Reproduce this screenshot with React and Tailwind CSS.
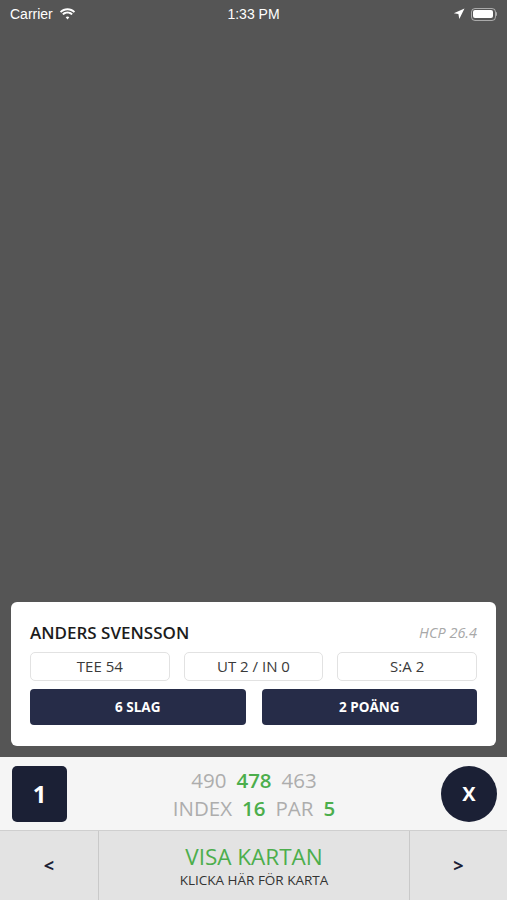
export default function App() {
  return (
    <div
      className="flex h-[900px] w-[507px] flex-col overflow-hidden bg-[#555555]"
      style={{ fontFamily: '"Open Sans", "Noto Sans", sans-serif' }}
    >
      {/* status bar */}
      <div className="relative flex h-[28px] items-center px-[10px] text-[14px] text-white" style={{ fontFamily: '"Liberation Sans", Arial, sans-serif' }}>
        <span>Carrier</span>
        <svg className="ml-[6px]" width="17" height="12" viewBox="0 0 17 12" fill="white">
          <path d="M8.5 2.2c2.4 0 4.6.9 6.3 2.5l1.3-1.3C14 1.4 11.4.3 8.5.3S3 1.4 .9 3.4l1.3 1.3C3.9 3.1 6.1 2.2 8.5 2.2z" />
          <path d="M8.5 5.4c1.5 0 2.9.6 4 1.6l1.3-1.3C12.4 4.3 10.5 3.5 8.5 3.5S4.6 4.3 3.2 5.7l1.3 1.3c1.1-1 2.5-1.6 4-1.6z" />
          <path d="M8.5 8.6c.7 0 1.3.3 1.8.7L8.5 11.5 6.7 9.3c.5-.4 1.1-.7 1.8-.7z" />
        </svg>
        <span className="absolute left-1/2 -translate-x-1/2">1:33 PM</span>
        <div className="ml-auto flex items-center gap-[6px]">
          <svg width="12" height="12" viewBox="0 0 12 12" fill="white">
            <path d="M11.5.5 .8 5.2l4.6.9.9 4.8z" />
          </svg>
          <div className="flex items-center">
            <div className="h-[13px] w-[25px] rounded-[4px] border border-white/50 p-[1.5px]">
              <div className="h-full w-full rounded-[2px] bg-white" />
            </div>
            <div className="h-[4px] w-[1.5px] rounded-r bg-white/50" />
          </div>
        </div>
      </div>

      <div className="flex-1" />

      {/* player card */}
      <div className="mx-[11px] mb-[11px] rounded-[6px] bg-white px-[19px] pb-[21px] pt-[19px]">
        <div className="flex items-center justify-between">
          <span className="text-[17px] font-semibold leading-[24px] text-[#1c1c1c]">ANDERS SVENSSON</span>
          <span className="text-[14.5px] italic text-[#a8a8a8]">HCP 26.4</span>
        </div>
        <div className="mt-[7px] grid grid-cols-3 gap-[14px]">
          {['TEE 54', 'UT 2 / IN 0', 'S:A 2'].map((t) => (
            <div
              key={t}
              className="flex h-[29px] items-center justify-center rounded-[5px] border border-[#e2e2e2] text-[15px] text-[#3a3a3a]"
            >
              {t}
            </div>
          ))}
        </div>
        <div className="mt-[8px] grid grid-cols-2 gap-[16px]">
          {['6 SLAG', '2 POÄNG'].map((t) => (
            <div
              key={t}
              className="flex h-[36px] items-center justify-center rounded-[4px] bg-[#262c48] text-[13.5px] font-bold text-white"
            >
              {t}
            </div>
          ))}
        </div>
      </div>

      {/* hole info */}
      <div className="flex h-[74px] items-center border-b border-[#cfcfcf] bg-[#f5f5f5] px-[12px]">
        <div className="flex h-[56px] w-[55px] items-center justify-center rounded-[5px] bg-[#1b2035] text-[24px] font-bold text-white">
          1
        </div>
        <div className="flex flex-1 flex-col items-center text-[20.5px] leading-[28px] text-[#adadad]">
          <div className="flex gap-[10px]">
            <span>490</span>
            <span className="font-semibold text-[#4cae4c]">478</span>
            <span>463</span>
          </div>
          <div className="flex gap-[10px]">
            <span>INDEX</span>
            <span className="font-semibold text-[#4cae4c]">16</span>
            <span>PAR</span>
            <span className="font-semibold text-[#4cae4c]">5</span>
          </div>
        </div>
        <div className="-mr-[2px] flex h-[56px] w-[56px] items-center justify-center rounded-full bg-[#1b2035] text-[20px] font-bold text-white">
          X
        </div>
      </div>

      {/* map nav */}
      <div className="flex h-[69px] bg-[#e3e3e3]">
        <div className="flex w-[99px] items-center justify-center border-r border-[#c9c9c9] text-[18px] font-bold text-[#1b2035]">
          &lt;
        </div>
        <div className="flex flex-1 flex-col items-center justify-center">
          <span className="text-[22.5px] leading-[29px] text-[#4cae4c]">VISA KARTAN</span>
          <span className="text-[13.5px] leading-[18px] text-[#333333]">KLICKA HÄR FÖR KARTA</span>
        </div>
        <div className="flex w-[98px] items-center justify-center border-l border-[#c9c9c9] text-[18px] font-bold text-[#1b2035]">
          &gt;
        </div>
      </div>
    </div>
  );
}
